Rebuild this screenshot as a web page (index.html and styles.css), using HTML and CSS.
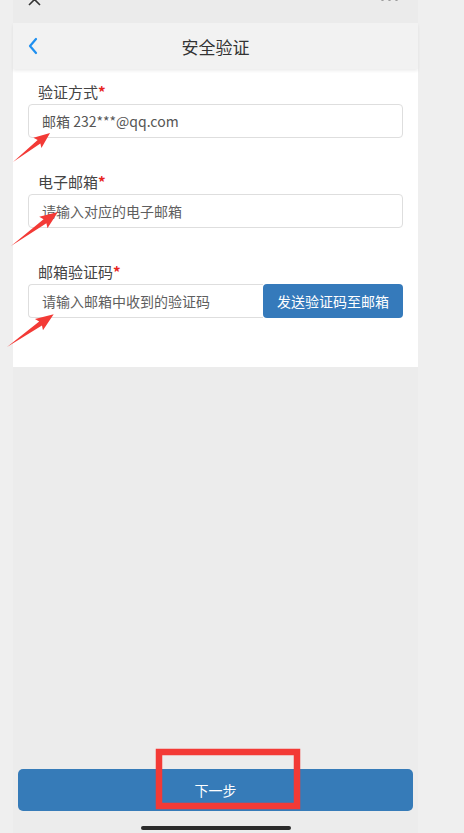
FILE: index.html
```html
<!DOCTYPE html>
<html lang="zh-CN">
  <head>
    <meta charset="UTF-8" />
    <meta name="viewport" content="width=device-width, initial-scale=1.0" />
    <title>安全验证</title>
    <link rel="stylesheet" href="styles.css">
  </head>
  <body>
    <div class="phone">
      <div class="status-bar">
        <svg class="close-icon" width="16" height="10" viewBox="0 0 16 10">
          <path d="M2 -6 L13 5 M13 -6 L2 5" stroke="#333" stroke-width="1.6" fill="none" />
        </svg>
        <div class="more-dots"><span></span><span></span><span></span></div>
      </div>

      <div class="nav-bar">
        <svg class="back-icon" width="12" height="18" viewBox="0 0 12 18">
          <path d="M9 2 L3 9 L9 16" stroke="#1e8ff0" stroke-width="2.2" fill="none" stroke-linecap="round" stroke-linejoin="round" />
        </svg>
        <div class="nav-title">安全验证</div>
      </div>

      <div class="form">
        <div class="field">
          <div class="field-label">验证方式<span class="required">*</span></div>
          <div class="field-input">邮箱 232***@qq.com</div>
        </div>
        <div class="field">
          <div class="field-label">电子邮箱<span class="required">*</span></div>
          <div class="field-input placeholder">请输入对应的电子邮箱</div>
        </div>
        <div class="field">
          <div class="field-label">邮箱验证码<span class="required">*</span></div>
          <div class="field-row">
            <div class="field-input placeholder code-input">请输入邮箱中收到的验证码</div>
            <button class="send-button">发送验证码至邮箱</button>
          </div>
        </div>
      </div>

      <div class="spacer"></div>

      <div class="footer">
        <button class="next-button">下一步</button>
        <div class="home-indicator"></div>
      </div>
    </div>

    <!-- 标注：箭头和红框 -->
    <svg class="annotations" width="464" height="833" viewBox="0 0 464 833">
      <g fill="#f33a36">
        <g transform="translate(13,162) rotate(-38)">
          <polygon points="0,0 33,-2.2 31,-6.5 47,0 31,6.5 33,2.2" />
        </g>
        <g transform="translate(11,246) rotate(-36)">
          <polygon points="0,0 42,-2.4 40,-7 58,0 40,7 42,2.4" />
        </g>
        <g transform="translate(7,347) rotate(-35)">
          <polygon points="0,0 41,-2.4 39,-7 57,0 39,7 41,2.4" />
        </g>
      </g>
      <rect x="159" y="752" width="138" height="54" fill="none" stroke="#f33a36" stroke-width="6.5" />
    </svg>
  </body>
</html>
```

FILE: styles.css
```css
body {
  margin: 0;
  background-color: #efefef;
  font-family: "Noto Sans CJK SC", "Noto Sans", sans-serif;
  color: #333;
}
.phone {
  width: 405px;
  height: 833px;
  margin-left: 13px;
  background-color: #ececec;
  display: flex;
  flex-direction: column;
}
.status-bar {
  height: 23px;
  background-color: #ebebeb;
  display: flex;
  justify-content: space-between;
  align-items: flex-start;
  padding: 0 20px 0 14px;
}
.close-icon {
  display: block;
}
.more-dots {
  display: flex;
  gap: 4px;
  margin-top: -2px;
}
.more-dots span {
  width: 3px;
  height: 3px;
  border-radius: 50%;
  background-color: #999;
}
.nav-bar {
  height: 46px;
  background-color: #f2f2f2;
  display: flex;
  align-items: center;
  justify-content: center;
  position: relative;
  box-shadow: 0 2px 3px rgba(0, 0, 0, 0.07);
  z-index: 1;
}
.back-icon {
  position: absolute;
  left: 14px;
  top: 14px;
}
.nav-title {
  font-size: 17px;
  color: #333;
}
.form {
  background-color: #fff;
  padding: 12px 15px 49px;
  display: flex;
  flex-direction: column;
  gap: 33px;
}
.field-label {
  font-size: 15px;
  line-height: 22px;
  color: #444;
  padding-left: 10px;
  margin-bottom: 1px;
}
.required {
  color: #e8241f;
  font-weight: bold;
}
.field-input {
  height: 34px;
  box-sizing: border-box;
  border: 1px solid #dedede;
  border-radius: 4px;
  padding: 0 13px;
  display: flex;
  align-items: center;
  font-size: 14px;
  color: #555;
}
.field-input.placeholder {
  color: #5e5e5e;
}
.field-row {
  display: flex;
  margin-top: 1px;
}
.code-input {
  flex: 1;
  border-radius: 4px 0 0 4px;
  border-right: none;
}
.send-button {
  width: 140px;
  height: 34px;
  border: none;
  border-radius: 4px;
  background-color: #357abb;
  color: #fff;
  font-family: inherit;
  font-size: 14px;
  padding: 0;
}
.spacer {
  flex: 1;
}
.footer {
  display: flex;
  flex-direction: column;
  align-items: center;
  padding: 0 5px 3px;
}
.next-button {
  width: 100%;
  height: 42px;
  border: none;
  border-radius: 5px;
  background-color: #367bb8;
  color: #fff;
  font-family: inherit;
  font-size: 14px;
}
.home-indicator {
  width: 150px;
  height: 4px;
  border-radius: 2px;
  background-color: #2b2b2b;
  margin-top: 15px;
}
.annotations {
  position: absolute;
  left: 0;
  top: 0;
  pointer-events: none;
}
```
